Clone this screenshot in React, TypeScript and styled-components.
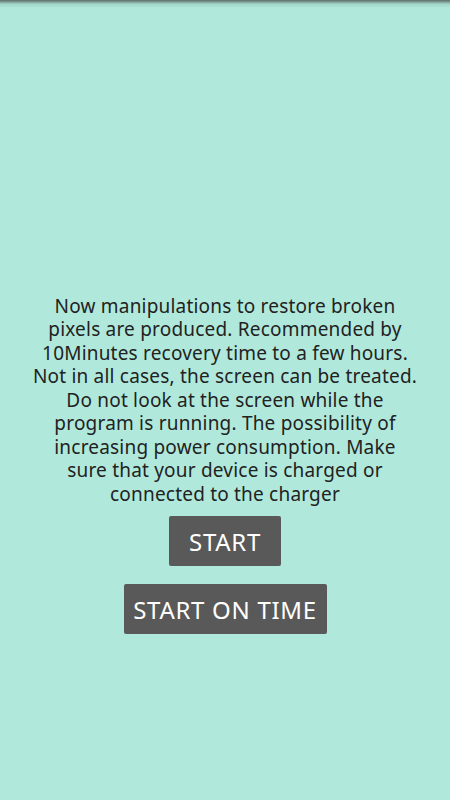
import React from 'react';
import styled, { createGlobalStyle } from 'styled-components';

const GlobalStyle = createGlobalStyle`
  html, body {
    margin: 0;
    padding: 0;
    background: #b0e9db;
  }
  body {
    font-family: "Noto Sans", "Open Sans", "Liberation Sans", sans-serif;
  }
`;

const Screen = styled.div`
  position: relative;
  width: 450px;
  height: 800px;
  background: #b0e9db;
  display: flex;
  flex-direction: column;
  align-items: center;
  padding-top: 295px;
  box-sizing: border-box;
  overflow: hidden;
`;

const TopShadow = styled.div`
  position: absolute;
  top: 0;
  left: 0;
  right: 0;
  height: 8px;
  background: linear-gradient(
    to bottom,
    #5b6f6a 0px,
    #7f9d96 2px,
    #a2d5c8 4px,
    #b0e9db 8px
  );
`;

const Message = styled.p`
  margin: 0;
  width: 420px;
  text-align: center;
  font-size: 19px;
  letter-spacing: 0.2px;
  line-height: 23.45px;
  color: #222;
`;

const Actions = styled.div`
  display: flex;
  flex-direction: column;
  align-items: center;
  gap: 18px;
  margin-top: 10px;
`;

const Button = styled.button<{ $width: number }>`
  width: ${props => props.$width}px;
  height: 50px;
  padding: 0;
  border: none;
  border-radius: 2px;
  background: #59595a;
  color: #fff;
  font-family: "Noto Sans", "Open Sans", sans-serif;
  font-size: 24px;
  letter-spacing: 0.7px;
  cursor: pointer;
`;

const lines = [
  'Now manipulations to restore broken',
  'pixels are produced. Recommended by',
  '10Minutes recovery time to a few hours.',
  'Not in all cases, the screen can be treated.',
  'Do not look at the screen while the',
  'program is running. The possibility of',
  'increasing power consumption. Make',
  'sure that your device is charged or',
  'connected to the charger',
];

function App() {
  return (
    <Screen>
      <GlobalStyle />
      <TopShadow />
      <Message>
        {lines.map((line, i) => (
          <React.Fragment key={i}>
            {line}
            {i < lines.length - 1 && <br />}
          </React.Fragment>
        ))}
      </Message>
      <Actions>
        <Button $width={112}>START</Button>
        <Button $width={203}>START ON TIME</Button>
      </Actions>
    </Screen>
  );
}

export default App;
